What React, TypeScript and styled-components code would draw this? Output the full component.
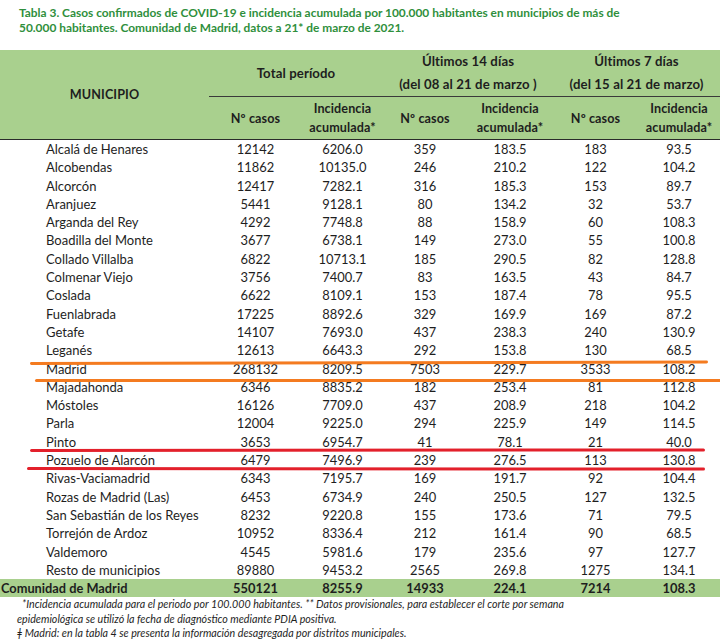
import React from "react";
import styled, { createGlobalStyle } from "styled-components";

const Global = createGlobalStyle`
  html, body { margin: 0; padding: 0; background: #ffffff; }
  body { font-family: "Lato", "Open Sans", "Liberation Sans", sans-serif; color: #1e1e1e; }
`;

const Page = styled.div`
  position: relative;
  width: 720px;
  height: 642px;
  overflow: hidden;
  background: #fff;
`;

const Title = styled.h1`
  margin: 0;
  padding: 5px 0 0 19px;
  height: 50px;
  box-sizing: border-box;
  font-size: 11.9px;
  line-height: 15px;
  font-weight: 700;
  color: #2f8f3c;
`;

const Table = styled.table`
  width: 720px;
  border-collapse: collapse;
  table-layout: fixed;
  font-size: 12.9px;
`;

const HeadRow = styled.tr<{ $h: number }>`
  height: ${(p) => p.$h}px;
  background: #a9d08e;
`;

const HeadCell = styled.th<{ $line?: boolean; $bottom?: boolean; $lh?: number }>`
  padding: 0;
  font-weight: 700;
  text-align: center;
  vertical-align: middle;
  color: #1e1e1e;
  font-size: 12.6px;
  line-height: ${(p) => p.$lh ?? 19}px;
  letter-spacing: 0.1px;
  border-bottom: ${(p) => (p.$bottom ? "1.5px solid #2b2b2b" : p.$line ? "1px solid #3a3a3a" : "none")};
`;

const GroupText = styled.span<{ $big?: boolean }>`
  font-size: ${(p) => (p.$big ? 13.2 : 12.6)}px;
`;

const Row = styled.tr<{ $total?: boolean }>`
  height: 18.3px;
  background: ${(p) => (p.$total ? "#a9d08e" : "#fff")};
  font-weight: ${(p) => (p.$total ? 700 : 400)};
`;

const NameCell = styled.td<{ $total?: boolean }>`
  padding: 0 0 0 ${(p) => (p.$total ? 1 : 46)}px;
  height: 18.3px;
  line-height: 18.3px;
  white-space: nowrap;
  font-size: ${(p) => (p.$total ? 12.8 : 13)}px;
`;

const NumCell = styled.td`
  padding: 0;
  text-align: center;
  height: 18.3px;
  line-height: 18.3px;
  white-space: nowrap;
`;

const Notes = styled.div`
  padding: 0 0 0 17px;
  font-size: 10.7px;
  line-height: 14.5px;
  font-style: italic;
  color: #1e1e1e;
`;

const NoteLine = styled.div<{ $indent?: number }>`
  padding-left: ${(p) => p.$indent ?? 0}px;
  white-space: nowrap;
`;

const Stroke = styled.div<{ $color: string; $top: number; $left: number; $width: number; $rot: number }>`
  position: absolute;
  top: ${(p) => p.$top}px;
  left: ${(p) => p.$left}px;
  width: ${(p) => p.$width}px;
  height: 3px;
  border-radius: 2px;
  background: ${(p) => p.$color};
  transform: rotate(${(p) => p.$rot}deg);
  transform-origin: left center;
`;

type R = [string, string, string, string, string, string, string];

const rows: R[] = [
  ["Alcalá de Henares", "12142", "6206.0", "359", "183.5", "183", "93.5"],
  ["Alcobendas", "11862", "10135.0", "246", "210.2", "122", "104.2"],
  ["Alcorcón", "12417", "7282.1", "316", "185.3", "153", "89.7"],
  ["Aranjuez", "5441", "9128.1", "80", "134.2", "32", "53.7"],
  ["Arganda del Rey", "4292", "7748.8", "88", "158.9", "60", "108.3"],
  ["Boadilla del Monte", "3677", "6738.1", "149", "273.0", "55", "100.8"],
  ["Collado Villalba", "6822", "10713.1", "185", "290.5", "82", "128.8"],
  ["Colmenar Viejo", "3756", "7400.7", "83", "163.5", "43", "84.7"],
  ["Coslada", "6622", "8109.1", "153", "187.4", "78", "95.5"],
  ["Fuenlabrada", "17225", "8892.6", "329", "169.9", "169", "87.2"],
  ["Getafe", "14107", "7693.0", "437", "238.3", "240", "130.9"],
  ["Leganés", "12613", "6643.3", "292", "153.8", "130", "68.5"],
  ["Madrid", "268132", "8209.5", "7503", "229.7", "3533", "108.2"],
  ["Majadahonda", "6346", "8835.2", "182", "253.4", "81", "112.8"],
  ["Móstoles", "16126", "7709.0", "437", "208.9", "218", "104.2"],
  ["Parla", "12004", "9225.0", "294", "225.9", "149", "114.5"],
  ["Pinto", "3653", "6954.7", "41", "78.1", "21", "40.0"],
  ["Pozuelo de Alarcón", "6479", "7496.9", "239", "276.5", "113", "130.8"],
  ["Rivas-Vaciamadrid", "6343", "7195.7", "169", "191.7", "92", "104.4"],
  ["Rozas de Madrid (Las)", "6453", "6734.9", "240", "250.5", "127", "132.5"],
  ["San Sebastián de los Reyes", "8232", "9220.8", "155", "173.6", "71", "79.5"],
  ["Torrejón de Ardoz", "10952", "8336.4", "212", "161.4", "90", "68.5"],
  ["Valdemoro", "4545", "5981.6", "179", "235.6", "97", "127.7"],
  ["Resto de municipios", "89880", "9453.2", "2565", "269.8", "1275", "134.1"],
];

const total: R = ["Comunidad de Madrid", "550121", "8255.9", "14933", "224.1", "7214", "108.3"];

const widths = [209, 93, 81, 84, 86, 85, 82];

export default function App() {
  return (
    <Page>
      <Global />
      <Title>
        Tabla 3. Casos confirmados de COVID-19 e incidencia acumulada por 100.000 habitantes en municipios de más de
        <br />
        50.000 habitantes. Comunidad de Madrid, datos a 21* de marzo de 2021.
      </Title>
      <Table>
        <colgroup>
          {widths.map((w, i) => (
            <col key={i} style={{ width: w }} />
          ))}
        </colgroup>
        <thead>
          <HeadRow $h={45}>
            <HeadCell rowSpan={2} $bottom>
              MUNICIPIO
            </HeadCell>
            <HeadCell colSpan={2} $line>
              <GroupText $big>Total período</GroupText>
            </HeadCell>
            <HeadCell colSpan={2} $line $lh={22}>
              <GroupText $big>Últimos 14 días</GroupText>
              <br />
              <GroupText $big>(del 08 al 21 de marzo )</GroupText>
            </HeadCell>
            <HeadCell colSpan={2} $line $lh={22}>
              <GroupText $big>Últimos 7 días</GroupText>
              <br />
              <GroupText $big>(del 15 al 21 de marzo)</GroupText>
            </HeadCell>
          </HeadRow>
          <HeadRow $h={43}>
            <HeadCell $bottom>Nº casos</HeadCell>
            <HeadCell $bottom>
              Incidencia
              <br />
              acumulada*
            </HeadCell>
            <HeadCell $bottom>Nº casos</HeadCell>
            <HeadCell $bottom>
              Incidencia
              <br />
              acumulada*
            </HeadCell>
            <HeadCell $bottom>Nº casos</HeadCell>
            <HeadCell $bottom>
              Incidencia
              <br />
              acumulada*
            </HeadCell>
          </HeadRow>
        </thead>
        <tbody>
          {rows.map((r) => (
            <Row key={r[0]}>
              <NameCell>{r[0]}</NameCell>
              {r.slice(1).map((v, i) => (
                <NumCell key={i}>{v}</NumCell>
              ))}
            </Row>
          ))}
          <Row $total>
            <NameCell $total>{total[0]}</NameCell>
            {total.slice(1).map((v, i) => (
              <NumCell key={i}>{v}</NumCell>
            ))}
          </Row>
        </tbody>
      </Table>
      <Notes>
        <NoteLine $indent={5}>
          *Incidencia acumulada para el periodo por 100.000 habitantes. ** Datos provisionales, para establecer el corte por semana
        </NoteLine>
        <NoteLine>epidemiológica se utilizó la fecha de diagnóstico mediante PDIA positiva.</NoteLine>
        <NoteLine>ǂ Madrid: en la tabla 4 se presenta la información desagregada por distritos municipales.</NoteLine>
      </Notes>
      <Stroke $color="#f47b20" $top={361.5} $left={30} $width={678} $rot={-0.12} />
      <Stroke $color="#f47b20" $top={378.5} $left={35} $width={690} $rot={0} />
      <Stroke $color="#e3202b" $top={448.5} $left={30} $width={675} $rot={-0.05} />
      <Stroke $color="#e3202b" $top={466.5} $left={27} $width={678} $rot={0.05} />
    </Page>
  );
}
